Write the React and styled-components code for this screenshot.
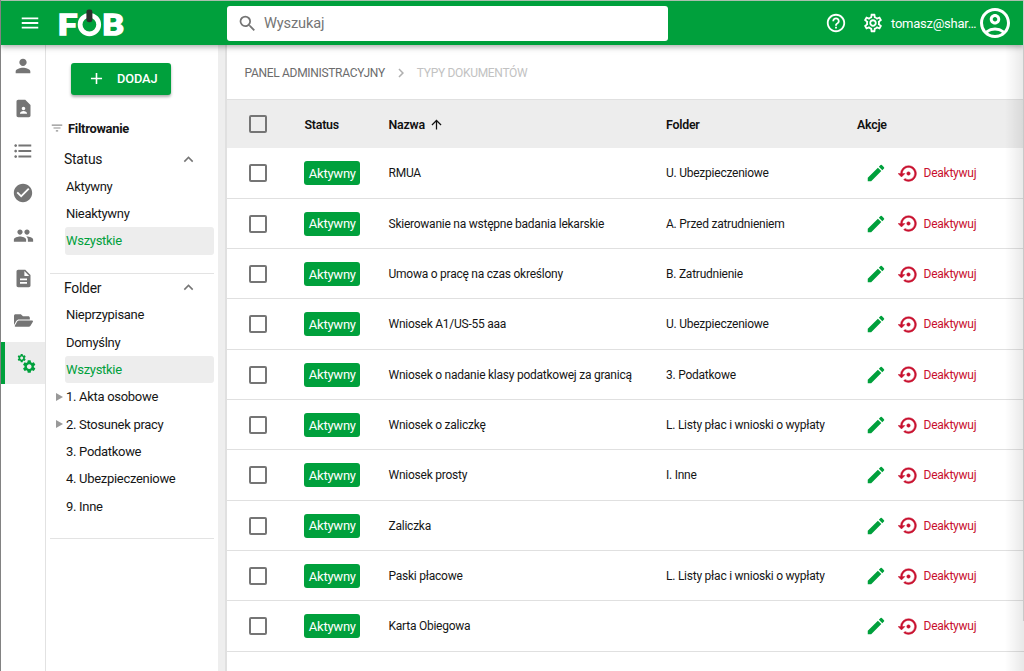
import React from "react";
import styled, { createGlobalStyle, css } from "styled-components";
import {
  MdPerson, MdContactPage, MdFormatListBulleted, MdCheckCircle, MdPeople, MdDescription,
  MdMenu, MdSearch, MdHelpOutline, MdOutlineSettings, MdOutlineAccountCircle, MdAdd,
  MdFilterList, MdKeyboardArrowUp, MdChevronRight, MdArrowUpward, MdEdit,
  MdSettingsBackupRestore, MdSettings,
} from "react-icons/md";
import { FaFolderOpen } from "react-icons/fa";

const GREEN = "#00a03c";

const GlobalStyle = createGlobalStyle`
  * { box-sizing: border-box; }
  body { margin: 0; font-family: Roboto, "Liberation Sans", sans-serif; color: #161616; background: #fff; overflow: hidden; }
  svg { display: block; flex: none; }
`;

const Window = styled.div`
  position: relative;
  display: flex;
  flex-direction: column;
  width: 1024px;
  height: 671px;
  overflow: hidden;
  border-left: 1px solid #828282;
  background: #fff;
`;

const TopBar = styled.header`
  position: relative;
  z-index: 3;
  display: flex;
  align-items: center;
  flex: none;
  width: 1022px;
  height: 45px;
  border-top: 1px solid #a9bfae;
  background: ${GREEN};
  color: #fff;
  box-shadow: 0 2px 4px rgba(0, 0, 0, 0.2), 0 4px 6px rgba(0, 0, 0, 0.1);
`;

const MenuButton = styled.div`
  display: flex;
  justify-content: center;
  width: 58px;
  font-size: 22px;
`;

const LogoBox = styled.div`
  display: flex;
  width: 168px;
  height: 44px;
`;

const SearchField = styled.div`
  display: flex;
  align-items: center;
  gap: 6px;
  width: 441px;
  height: 35px;
  padding-left: 10px;
  border-radius: 3px;
  background: #fff;
  color: #757575;
  font-size: 14.6px;
  letter-spacing: -0.15px;
`;

const TopActions = styled.div`
  display: flex;
  align-items: center;
  flex: 1;
  padding-left: 157px;
`;

const Account = styled.span`
  width: 84px;
  margin-left: 7px;
  margin-right: 2px;
  font-size: 13px;
  letter-spacing: -0.25px;
  white-space: nowrap;
`;

const GearSlot = styled.div`
  margin-left: 15px;
`;

const Body = styled.div`
  display: flex;
  flex: 1;
  min-height: 0;
`;

const Rail = styled.nav`
  width: 45px;
  border-right: 1px solid #e2e2e2;
`;

const RailItem = styled.div`
  display: flex;
  align-items: center;
  justify-content: center;
  height: 42.4px;
  color: #757575;
  border-left: 4px solid transparent;
  padding-right: 4px;
  ${(p) => p.$active && css`
    border-left-color: ${GREEN};
    background: #ececec;
    color: ${GREEN};
    padding: 1px 0 0 3px;
  `}
`;

const Sidebar = styled.aside`
  width: 172px;
  padding: 17.5px 4px 0 4px;
`;

const AddButton = styled.button`
  display: flex;
  align-items: center;
  width: 100px;
  height: 32px;
  margin: 0 0 0 21px;
  padding: 0 0 0 16px;
  gap: 11px;
  border: 0;
  border-radius: 3px;
  background: ${GREEN};
  color: #fff;
  font: 500 12.8px Roboto, sans-serif;
  letter-spacing: -0.1px;
  box-shadow: 0 2px 3px rgba(0, 0, 0, 0.32);
`;

const FilterHeading = styled.div`
  display: flex;
  align-items: center;
  gap: 4px;
  height: 20px;
  margin-top: 23.5px;
  font-size: 12.9px;
  font-weight: 700;
  letter-spacing: -0.28px;
  svg { color: #909090; }
`;

const Section = styled.section`
  border-bottom: 1px solid #e3e3e3;
  padding-bottom: ${(p) => p.$bottom}px;
`;

const SectionTitle = styled.div`
  display: flex;
  align-items: center;
  justify-content: space-between;
  height: 27px;
  margin-top: ${(p) => p.$top}px;
  padding: 0 16px 0 14px;
  font-size: 13.9px;
  letter-spacing: -0.25px;
  svg { color: #757575; }
`;

const Option = styled.div`
  display: flex;
  align-items: center;
  height: 27.35px;
  margin-left: 15px;
  padding-left: 1px;
  border-radius: 3px;
  font-size: 13px;
  letter-spacing: -0.3px;
  color: ${(p) => (p.$active ? GREEN : "#161616")};
  background: ${(p) => (p.$active ? "#ededed" : "transparent")};
`;

const Caret = styled.i`
  width: 0;
  height: 0;
  margin-left: -10px;
  margin-right: 3px;
  border-left: 7px solid #999;
  border-top: 4px solid transparent;
  border-bottom: 4px solid transparent;
`;

const Divider = styled.div`
  width: 9px;
  background: #eeeeee;
  border-right: 2px solid #e0e0e0;
`;

const Main = styled.main`
  flex: 1;
  font-size: 12px;
  letter-spacing: -0.24px;
`;

const Breadcrumbs = styled.div`
  display: flex;
  align-items: center;
  height: 54px;
  padding-left: 17.5px;
  padding-top: 2px;
  color: #6c6c6c;
  letter-spacing: -0.31px;
  svg { margin: 0 7px; color: #b0b0b0; }
`;

const Last = styled.span`
  color: #c2c2c2;
`;

const rowGrid = css`
  display: grid;
  grid-template-columns: 77.5px 84px 277.5px 191px 1fr;
  align-items: center;
`;

const HeadRow = styled.div`
  ${rowGrid}
  height: 49.4px;
  padding-top: 0.4px;
  border-top: 1px solid #e0e0e0;
  background: #ededed;
  font-size: 12.4px;
  font-weight: 600;
  color: #111;
`;

const Row = styled.div`
  ${rowGrid}
  height: 50.33px;
  padding-top: 0.8px;
  border-bottom: 1px solid #e0e0e0;
`;

const Checkbox = styled.span`
  width: 18px;
  height: 18px;
  margin-left: 22.4px;
  border: 2px solid #757575;
  border-radius: 2px;
`;

const Badge = styled.span`
  display: flex;
  align-items: center;
  justify-content: center;
  width: 56px;
  height: 24px;
  margin-left: -0.2px;
  border-radius: 3px;
  background: ${GREEN};
  color: #fff;
  font-size: 13px;
`;

const SortLabel = styled.div`
  display: flex;
  align-items: center;
  gap: 4px;
`;

const Actions = styled.div`
  display: flex;
  align-items: center;
  padding-left: 7.5px;
  color: #c8102e;
`;

const PencilSlot = styled.div`
  margin-right: 11.5px;
  color: ${GREEN};
`;

const RestoreSlot = styled.div`
  svg { stroke: currentColor; stroke-width: 0.5; }
  svg path[fill="none"] { stroke: none; }
`;

const ActionLabel = styled.span`
  margin-left: 4.5px;
`;

const EdgeShade = styled.div`
  position: absolute;
  z-index: 2;
  top: 45px;
  right: 0;
  bottom: 0;
  width: 19px;
  background: linear-gradient(to right, transparent, rgba(0, 0, 0, 0.09));
`;

const ScrollEdge = styled.div`
  position: absolute;
  z-index: 4;
  top: 0;
  right: 0;
  width: 1px;
  height: 621px;
  background: #c9c9c9;
`;

const Logo = () => (
  <svg width="72" height="44" viewBox="-2 0 72 44" fill="#fff" overflow="visible">
    <text x="-3.6" y="34" fontFamily="Lato" fontWeight="900" fontSize="28.5" stroke="#fff" strokeWidth="1.4" textLength="20" lengthAdjust="spacingAndGlyphs">F</text>
    <circle cx="28.4" cy="23.6" r="9.3" fill="none" stroke="#fff" strokeWidth="4.8" />
    <rect x="25.4" y="8.5" width="6" height="12.7" rx="2.4" fill="#2d2d2d" />
    <text x="41" y="34" fontFamily="Lato" fontWeight="900" fontSize="28.5" stroke="#fff" strokeWidth="1.4" textLength="22" lengthAdjust="spacingAndGlyphs">B</text>
  </svg>
);

const Gears = () => (
  <svg width="20" height="21" viewBox="0 0 20 21">
    <MdSettings x="-0.4" y="0" size="10.2" />
    <MdSettings x="4.4" y="5.8" size="15.6" />
  </svg>
);

const RAIL = [
  <MdPerson size={22} />, <MdContactPage size={21} />, <MdFormatListBulleted size={22} />,
  <MdCheckCircle size={22} />, <MdPeople size={21} />, <MdDescription size={21} />,
  <FaFolderOpen size={19} />,
];

const STATUSES = ["Aktywny", "Nieaktywny", "Wszystkie"];
const FOLDERS = [
  ["Nieprzypisane"], ["Domyślny"], ["Wszystkie"], ["1. Akta osobowe", true],
  ["2. Stosunek pracy", true], ["3. Podatkowe"], ["4. Ubezpieczeniowe"], ["9. Inne"],
];

const DOCUMENTS = [
  ["RMUA", "U. Ubezpieczeniowe"],
  ["Skierowanie na wstępne badania lekarskie", "A. Przed zatrudnieniem"],
  ["Umowa o pracę na czas określony", "B. Zatrudnienie"],
  ["Wniosek A1/US-55 aaa", "U. Ubezpieczeniowe"],
  ["Wniosek o nadanie klasy podatkowej za granicą", "3. Podatkowe"],
  ["Wniosek o zaliczkę", "L. Listy płac i wnioski o wypłaty"],
  ["Wniosek prosty", "I. Inne"],
  ["Zaliczka", ""],
  ["Paski płacowe", "L. Listy płac i wnioski o wypłaty"],
  ["Karta Obiegowa", ""],
];

export default function App() {
  return (
    <Window>
      <GlobalStyle />
      <TopBar>
        <MenuButton><MdMenu /></MenuButton>
        <LogoBox><Logo /></LogoBox>
        <SearchField><MdSearch size={21} />Wyszukaj</SearchField>
        <TopActions>
          <MdHelpOutline size={22} />
          <GearSlot><MdOutlineSettings size={22} /></GearSlot>
          <Account>tomasz@shar…</Account>
          <MdOutlineAccountCircle size={36} />
        </TopActions>
      </TopBar>
      <Body>
        <Rail>
          {RAIL.map((icon, i) => <RailItem key={i}>{icon}</RailItem>)}
          <RailItem $active><Gears /></RailItem>
        </Rail>
        <Sidebar>
          <AddButton><MdAdd size={19} />DODAJ</AddButton>
          <FilterHeading><MdFilterList size={14} />Filtrowanie</FilterHeading>
          <Section $bottom={18.2}>
            <SectionTitle $top={7.5}>Status<MdKeyboardArrowUp size={19} /></SectionTitle>
            {STATUSES.map((s) => <Option key={s} $active={s === "Wszystkie"}>{s}</Option>)}
          </Section>
          <Section $bottom={18.5}>
            <SectionTitle $top={0.5}>Folder<MdKeyboardArrowUp size={19} /></SectionTitle>
            {FOLDERS.map(([name, nested]) => (
              <Option key={name} $active={name === "Wszystkie"}>{nested && <Caret />}{name}</Option>
            ))}
          </Section>
        </Sidebar>
        <Divider />
        <Main>
          <Breadcrumbs>PANEL ADMINISTRACYJNY<MdChevronRight size={18} /><Last>TYPY DOKUMENTÓW</Last></Breadcrumbs>
          <HeadRow>
            <Checkbox />
            <span>Status</span>
            <SortLabel>Nazwa<MdArrowUpward size={15} /></SortLabel>
            <span>Folder</span>
            <span>Akcje</span>
          </HeadRow>
          {DOCUMENTS.map(([name, folder]) => (
            <Row key={name}>
              <Checkbox />
              <Badge>Aktywny</Badge>
              <span>{name}</span>
              <span>{folder}</span>
              <Actions>
                <PencilSlot><MdEdit size={22} /></PencilSlot>
                <RestoreSlot><MdSettingsBackupRestore size={21} /></RestoreSlot>
                <ActionLabel>Deaktywuj</ActionLabel>
              </Actions>
            </Row>
          ))}
        </Main>
      </Body>
      <EdgeShade />
      <ScrollEdge />
    </Window>
  );
}
